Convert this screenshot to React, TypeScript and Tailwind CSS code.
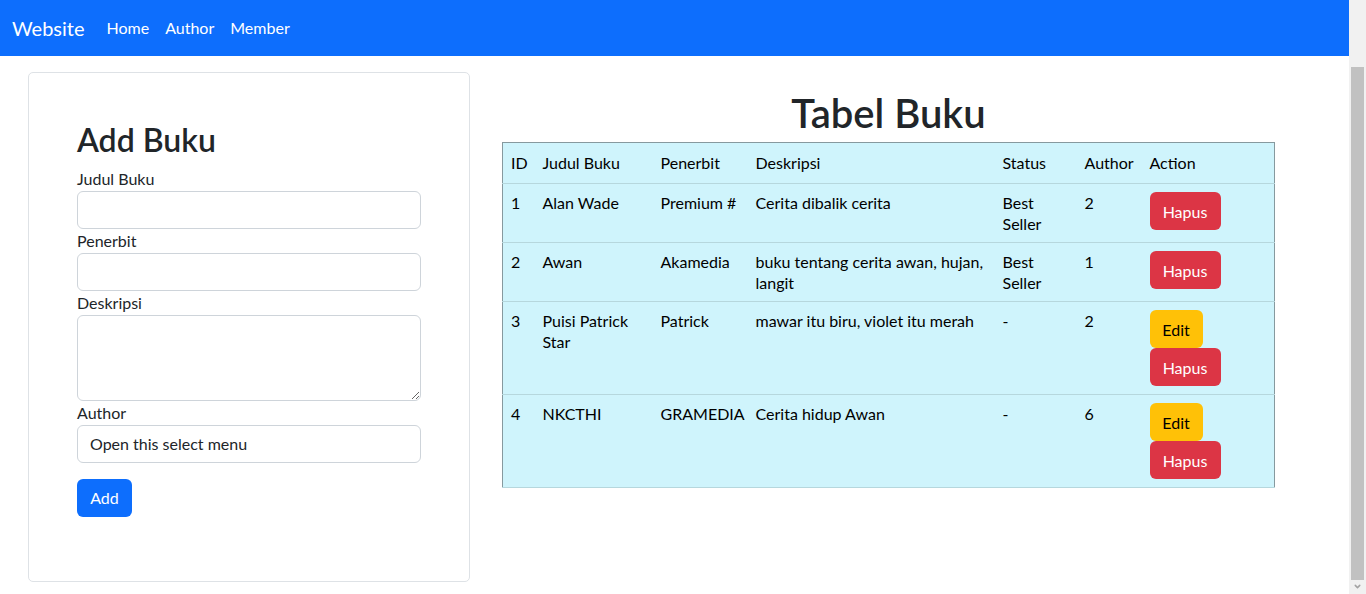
import { ChevronDown } from 'lucide-react';

type Book = {
  id: number;
  judul: string;
  penerbit: string;
  deskripsi: string;
  status: string;
  author: number;
  editable: boolean;
};

const books: Book[] = [
  { id: 1, judul: 'Alan Wade', penerbit: 'Premium #', deskripsi: 'Cerita dibalik cerita', status: 'Best Seller', author: 2, editable: false },
  { id: 2, judul: 'Awan', penerbit: 'Akamedia', deskripsi: 'buku tentang cerita awan, hujan, langit', status: 'Best Seller', author: 1, editable: false },
  { id: 3, judul: 'Puisi Patrick Star', penerbit: 'Patrick', deskripsi: 'mawar itu biru, violet itu merah', status: '-', author: 2, editable: true },
  { id: 4, judul: 'NKCTHI', penerbit: 'GRAMEDIA', deskripsi: 'Cerita hidup Awan', status: '-', author: 6, editable: true },
];

const fontStack = "font-['Segoe_UI',Lato,'Noto_Sans',sans-serif]";

const Navbar = () => (
  <nav className="h-[56px] bg-[#0d6efd] flex items-center px-[12px]">
    <span className="text-[20px] leading-[30px] text-white mr-[14px]">Website</span>
    <div className="flex items-center">
      <a className="px-[8px] text-[16px] leading-6 text-white">Home</a>
      <a className="px-[8px] text-[16px] leading-6 text-white">Author</a>
      <a className="px-[8px] text-[16px] leading-6 text-white">Member</a>
    </div>
  </nav>
);

const Field = ({ label, children }: { label: string; children: React.ReactNode }) => (
  <div>
    <label className="block text-[16px] leading-6 text-[#212529]">{label}</label>
    {children}
  </div>
);

const inputClass =
  'block w-full h-[38px] rounded-[6px] border border-[#ced4da] bg-white px-[12px] text-[16px] text-[#212529] outline-none';

const AddBukuForm = () => (
  <div className="w-[442px] shrink-0 border border-[#dee2e6] rounded-[5px] bg-white px-[48px] pt-[48px] pb-[64px]">
    <h2 className="text-[32px] leading-[38px] font-semibold text-[#212529] mb-[8px]">Add Buku</h2>
    <Field label="Judul Buku">
      <input className={inputClass} />
    </Field>
    <Field label="Penerbit">
      <input className={inputClass} />
    </Field>
    <Field label="Deskripsi">
      <textarea rows={3} className="block w-full h-[86px] rounded-[6px] border border-[#ced4da] bg-white px-[12px] py-[6px] text-[16px] outline-none" />
    </Field>
    <Field label="Author">
      <select className="block w-full h-[38px] appearance-none rounded-[6px] border border-[#ced4da] bg-white px-[12px] text-[16px] text-[#212529] outline-none">
        <option>Open this select menu</option>
      </select>
    </Field>
    <button className="mt-[16px] h-[38px] w-[55px] rounded-[6px] bg-[#0d6efd] text-white text-[16px]">
      Add
    </button>
  </div>
);

const headers = ['ID', 'Judul Buku', 'Penerbit', 'Deskripsi', 'Status', 'Author', 'Action'];

const TabelBuku = () => (
  <div className="w-[773px] shrink-0 pt-[17px]">
    <h1 className="text-center text-[40px] leading-[48px] font-semibold text-[#212529] mb-[5px]">Tabel Buku</h1>
    <table className="w-full table-fixed bg-[#cff4fc] text-black border-x border-t border-[#86999e]">
      <colgroup>
        <col className="w-[32px]" />
        <col className="w-[118px]" />
        <col className="w-[95px]" />
        <col className="w-[247px]" />
        <col className="w-[82px]" />
        <col className="w-[65px]" />
        <col />
      </colgroup>
      <thead>
        <tr className="border-b border-[#b6d7dd]">
          {headers.map((h) => (
            <th key={h} className="px-[8px] py-[8px] text-left font-normal text-[16px] leading-6">
              {h}
            </th>
          ))}
        </tr>
      </thead>
      <tbody>
        {books.map((b) => (
          <tr key={b.id} className="border-b border-[#b6d7dd] align-top text-[16px] leading-[21px]">
            <td className="p-[8px]">{b.id}</td>
            <td className="p-[8px]">{b.judul}</td>
            <td className="p-[8px]">{b.penerbit}</td>
            <td className="p-[8px]">{b.deskripsi}</td>
            <td className="p-[8px]">{b.status}</td>
            <td className="p-[8px]">{b.author}</td>
            <td className="p-[8px]">
              <div className="flex flex-col items-start">
                {b.editable && (
                  <button className="h-[38px] w-[53px] rounded-[6px] bg-[#ffc107] text-black text-[16px]">Edit</button>
                )}
                <button className="h-[38px] w-[71px] rounded-[6px] bg-[#dc3545] text-white text-[16px]">Hapus</button>
                {!b.editable && <div className="h-[4px]" />}
              </div>
            </td>
          </tr>
        ))}
      </tbody>
    </table>
  </div>
);

const Scrollbar = () => (
  <div className="w-[17px] h-full bg-[#f1f1f1] flex flex-col items-center pt-[67px]">
    <div className="w-[13px] h-[513px] bg-[#c1c1c1]" />
    <ChevronDown className="w-[9px] h-[9px] mt-[2px] text-[#a3a3a3]" strokeWidth={4} />
  </div>
);

export default function App() {
  return (
    <div className={`h-[594px] w-[1366px] flex overflow-hidden bg-white ${fontStack}`}>
      <div className="flex-1 min-w-0">
        <Navbar />
        <main className="flex items-start gap-[32px] pl-[28px] pt-[16px]">
          <AddBukuForm />
          <TabelBuku />
        </main>
      </div>
      <Scrollbar />
    </div>
  );
}
